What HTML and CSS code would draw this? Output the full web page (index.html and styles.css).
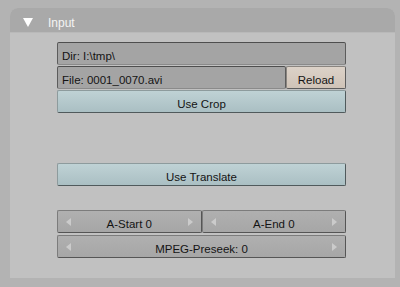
FILE: index.html
```html
<!DOCTYPE html>
<html lang="en">
<head>
  <meta charset="UTF-8"/>
  <title>Input</title>
  <link rel="stylesheet" href="styles.css">
</head>
<body>

  <div class="panel">
    <div class="panel-header">
      <svg class="toggle" width="10" height="9" viewBox="0 0 10 9">
        <polygon points="0,0 10,0 5,9" fill="#ffffff"/>
      </svg>
      <span class="panel-title">Input</span>
    </div>

    <div class="panel-body">
      <div class="field text-field">Dir: I:\tmp\</div>
      <div class="row">
        <div class="field text-field grow">File: 0001_0070.avi</div>
        <button class="btn reload">Reload</button>
      </div>
      <button class="btn toggle-btn">Use Crop</button>

      <button class="btn toggle-btn translate">Use Translate</button>

      <div class="row numbers">
        <div class="field num grow">
          <span class="arrow left"></span>
          <span class="num-label">A-Start 0</span>
          <span class="arrow right"></span>
        </div>
        <div class="field num grow">
          <span class="arrow left"></span>
          <span class="num-label">A-End 0</span>
          <span class="arrow right"></span>
        </div>
      </div>
      <div class="field num">
        <span class="arrow left"></span>
        <span class="num-label">MPEG-Preseek: 0</span>
        <span class="arrow right"></span>
      </div>
    </div>
  </div>

</body>
</html>
```

FILE: styles.css
```css
body {
  margin: 0;
  padding: 8px 5px 0 10px;
  background-color: #b3b3b3;
  font-family: "Liberation Sans", Arial, sans-serif;
  font-size: 11.5px;
  color: #141414;
}

.panel {
  width: 385px;
  height: 270px;
  background-color: #c1c1c1;
  border-radius: 8px 8px 0 0;
}

.panel-header {
  height: 25px;
  display: flex;
  align-items: center;
  background-color: #a9a9a9;
  border-radius: 8px 8px 0 0;
  border-bottom: 1px solid #b9b9b9;
  box-sizing: border-box;
}

.toggle {
  margin-left: 13px;
  margin-top: 4px;
}

.panel-title {
  margin-left: 15px;
  margin-top: 6px;
  font-size: 12px;
  color: #f4f4f4;
}

.panel-body {
  padding: 9px 49px 0 47px;
  display: flex;
  flex-direction: column;
  gap: 1px;
}

.row {
  display: flex;
}

.grow {
  flex: 1;
}

.field,
.btn {
  height: 23px;
  box-sizing: border-box;
  border: 1px solid #5c5c5c;
  border-radius: 2px;
  font-family: inherit;
  font-size: 11.5px;
  color: #141414;
  margin: 0;
}

.text-field {
  display: flex;
  align-items: center;
  padding: 5px 0 0 4px;
  background-color: #a4a4a4;
  border-top-color: #4e4e4e;
  border-bottom-color: #8a8a8a;
}

.btn {
  padding: 5px 0 0 0;
  cursor: pointer;
}

.reload {
  width: 60px;
  background: linear-gradient(#dcd2c8, #cfc3b7);
  border-color: #8a8580;
  border-right-color: #5c5c5c;
  border-bottom-color: #5c5c5c;
}

.toggle-btn {
  width: 100%;
  background: linear-gradient(#bfd2d5, #aabfc3);
  border-color: #8d9b9d;
  border-right-color: #505a5c;
  border-bottom-color: #505a5c;
}

.translate {
  margin-top: 49px;
}

.numbers {
  margin-top: 23px;
  margin-bottom: 1px;
}

.num {
  display: flex;
  align-items: center;
  justify-content: space-between;
  padding: 4px 8px 0 8px;
  background: linear-gradient(#b0b0b0, #a6a6a6);
  border-color: #7c7c7c;
  border-right-color: #555555;
  border-bottom-color: #555555;
}

.num .arrow {
  margin-top: -4px;
}

.num-label {
  flex: 1;
  text-align: center;
}

.arrow {
  width: 0;
  height: 0;
  border-top: 4px solid transparent;
  border-bottom: 4px solid transparent;
}

.arrow.left {
  border-right: 5px solid #cbcbcb;
}

.arrow.right {
  border-left: 5px solid #cbcbcb;
}
```
